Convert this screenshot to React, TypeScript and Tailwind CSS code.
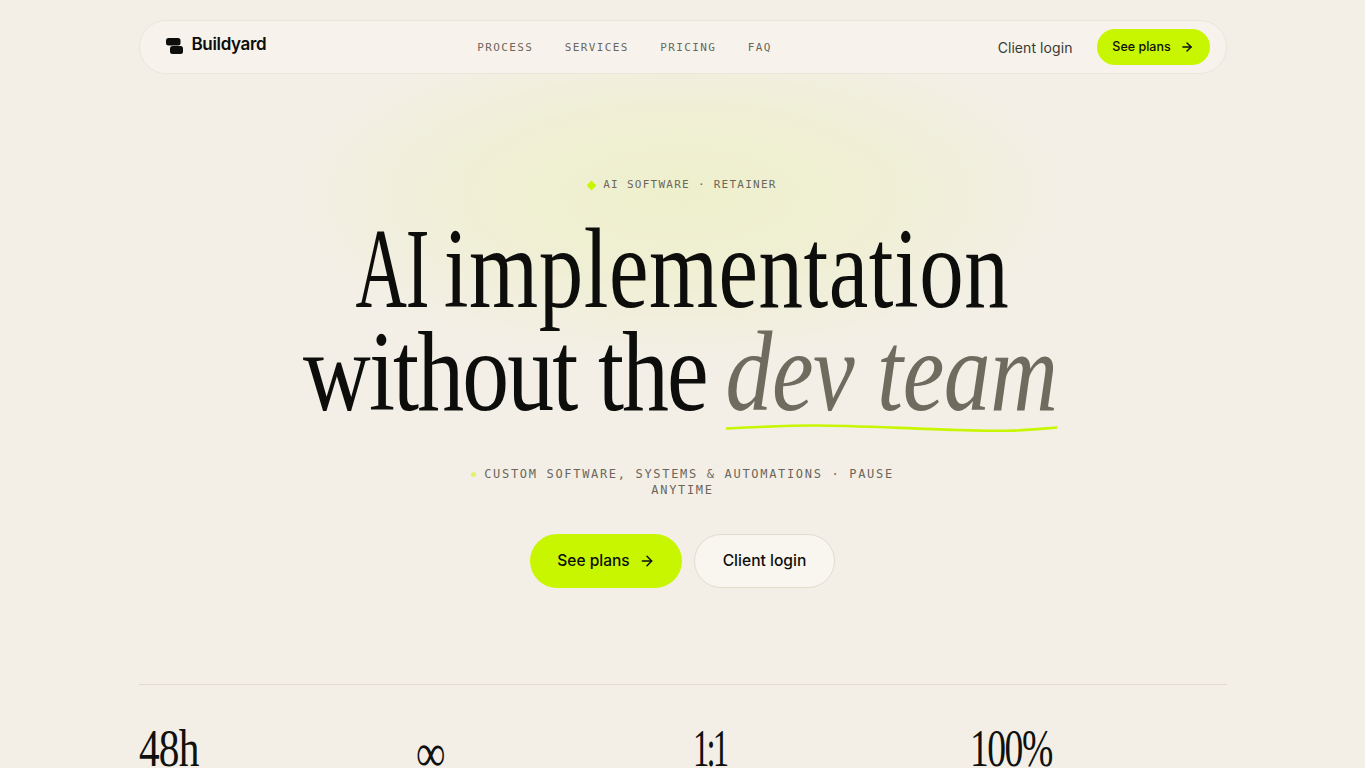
import { ArrowRight } from "lucide-react";

const mono = "font-['DejaVu_Sans_Mono',monospace]";
const sans = "font-['Inter',sans-serif]";
const serif = "font-['Liberation_Serif',serif]";

function Logo() {
  return (
    <svg width="18" height="18" viewBox="0 0 18 18" className="shrink-0">
      <rect x="0" y="1" width="14.5" height="7.5" rx="2.5" fill="#0d0e0b" />
      <rect x="4" y="9" width="13" height="8" rx="2.5" fill="#0d0e0b" />
    </svg>
  );
}

export default function App() {
  return (
    <div className={`relative h-[768px] w-full overflow-hidden bg-[#f3efe7] ${sans}`}>
      <div className="absolute left-[290px] top-[30px] h-[330px] w-[780px] bg-[radial-gradient(ellipse_at_center,#eef0cc_0%,#f0efd6_40%,#f3efe7_72%)]" />
      <div className="relative flex flex-col items-center">
        <nav className="mt-5 flex h-[54px] w-[1088px] items-center rounded-full border border-[#ebe6da] bg-[#f7f3ec] pl-[26px] pr-4">
          <div className="mb-[3px] flex items-center gap-[8px]">
            <Logo />
            <span className="mb-[2px] text-[17px] font-semibold tracking-[-0.02em] text-[#0d0e0b]">Buildyard</span>
          </div>
          <div className={`ml-[211px] mt-[3px] flex items-center gap-[31.5px] text-[11px] tracking-[0.125em] text-[#6b675c] ${mono}`}>
            <span>PROCESS</span>
            <span>SERVICES</span>
            <span>PRICING</span>
            <span>FAQ</span>
          </div>
          <div className="ml-auto flex items-center gap-[24px]">
            <span className="text-[14px] tracking-[0.005em] text-[#3a3a34]">Client login</span>
            <button className="flex h-9 w-[113px] items-center justify-center gap-[9px] rounded-full bg-[#c8f600] text-[12.5px] font-medium text-[#0d0e0b]">
              See plans
              <ArrowRight size={14} strokeWidth={2.4} />
            </button>
          </div>
        </nav>

        <div className={`mt-[104px] flex items-center gap-[8px] text-[11px] leading-[14px] tracking-[0.115em] text-[#6b675c] ${mono}`}>
          <span className="h-[7px] w-[7px] rotate-45 bg-[#c8f600]" />
          <span>AI SOFTWARE · RETAINER</span>
        </div>

        <h1 className={`mt-[25px] whitespace-nowrap text-center text-[114px] font-normal leading-[103px] text-[#0d0e0b] ${serif}`}>
          <div className="scale-x-[0.78]">
            <span className="ml-[-23px] inline-block origin-right scale-x-[0.8] tracking-[-0.015em]">AI</span>{" "}
            <span className="ml-[-9px] tracking-[0.006em]">implementation</span>
          </div>
          <div className="scale-x-[0.822] pr-[5px] tracking-[-0.015em]">
            <span className="tracking-[-0.02em]">without the</span>{" "}
            <span className="relative ml-[-4px] italic tracking-[-0.005em] text-[#6f6b5e]">
              dev team
              <svg viewBox="0 0 330 8" preserveAspectRatio="none" className="absolute left-0 top-[116px] h-2 w-full">
                <path d="M1 4.5 C 30 3, 60 1.5, 90 1.5 S 170 4, 230 6 S 300 6, 329 3.5" fill="none" stroke="#c8f600" strokeWidth="2.6" strokeLinecap="round" />
              </svg>
            </span>
          </div>
        </h1>

        <p className={`mt-[43px] w-[440px] text-center text-[12px] leading-4 tracking-[0.14em] text-[#6b675c] ${mono}`}>
          <span className="mr-[8px] inline-block h-[5px] w-[5px] rounded-full bg-[#dcf56a] align-middle" />
          CUSTOM SOFTWARE, SYSTEMS &amp; AUTOMATIONS · PAUSE ANYTIME
        </p>

        <div className="mt-[36px] flex items-center gap-3">
          <button className="flex h-[54px] w-[152px] items-center justify-center gap-[9px] rounded-full bg-[#c8f600] text-[15.5px] font-medium text-[#0d0e0b]">
            See plans
            <ArrowRight size={16} strokeWidth={2.2} />
          </button>
          <button className="h-[54px] w-[141px] rounded-full border border-[#e2dccd] bg-[#f9f6f0] text-[15.6px] font-medium text-[#0d0e0b]">
            Client login
          </button>
        </div>

        <div className="mt-[96px] w-[1088px] border-t border-[#e2dccd] pt-[37px]">
          <div className={`grid grid-cols-4 gap-[21.33px] text-[53px] leading-none text-[#10110e] ${serif}`}>
            <div className="origin-left scale-x-[0.78] tracking-[-0.02em]">48h</div>
            <div className="mt-[5px] origin-left scale-x-[0.78] tracking-[-0.02em]">∞</div>
            <div className="origin-left scale-x-[0.62] tracking-[-0.09em]">1:1</div>
            <div className="origin-left scale-x-[0.71] tracking-[-0.04em]">100%</div>
          </div>
        </div>
      </div>
    </div>
  );
}
